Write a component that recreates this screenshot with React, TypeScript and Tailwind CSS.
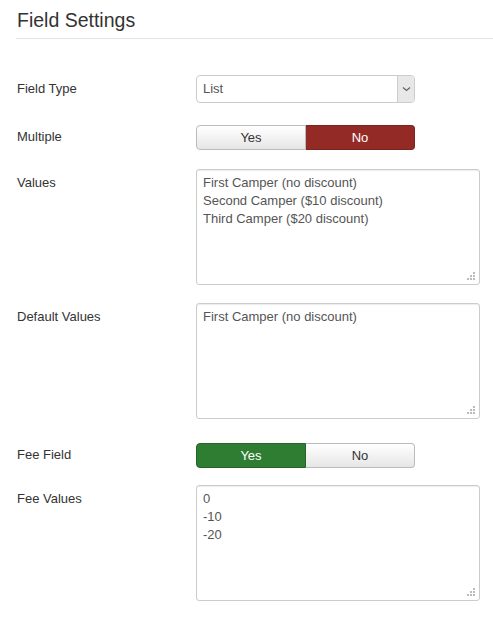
const FONT = { fontFamily: '"Liberation Sans", Arial, sans-serif' };

function Grip() {
  return (
    <svg
      className="absolute right-[3px] bottom-[3px]"
      width="9"
      height="9"
      viewBox="0 0 9 9"
    >
      <rect x="6" y="0" width="2" height="2" fill="#bbb" />
      <rect x="3" y="3" width="2" height="2" fill="#bbb" />
      <rect x="6" y="3" width="2" height="2" fill="#bbb" />
      <rect x="0" y="6" width="2" height="2" fill="#bbb" />
      <rect x="3" y="6" width="2" height="2" fill="#bbb" />
      <rect x="6" y="6" width="2" height="2" fill="#bbb" />
    </svg>
  );
}

function TextArea({ lines }: { lines: string[] }) {
  return (
    <div className="relative w-[284px] h-[116px] border border-[#ccc] rounded-[3px] bg-white shadow-[inset_0_1px_1px_rgba(0,0,0,0.075)] px-[6px] py-[4px] text-[13px] leading-[18px] text-[#555]">
      {lines.map((l) => (
        <div key={l}>{l}</div>
      ))}
      <Grip />
    </div>
  );
}

function Toggle({ value }: { value: "yes" | "no" }) {
  const off =
    "bg-gradient-to-b from-white to-[#e6e6e6] text-[#333] border-[#bbb]";
  return (
    <div className="flex w-[219px] h-[25px] text-[13px]">
      <div
        className={
          "flex-1 flex items-center justify-center border rounded-l-[4px] " +
          (value === "yes"
            ? "bg-[#2f7d32] border-[#25632a] text-white"
            : off)
        }
      >
        Yes
      </div>
      <div
        className={
          "flex-1 flex items-center justify-center border border-l-0 rounded-r-[4px] " +
          (value === "no"
            ? "bg-[#942a25] border-[#7a2420] text-white"
            : off)
        }
      >
        No
      </div>
    </div>
  );
}

function Row({
  label,
  labelPad = "pt-[5px]",
  className = "",
  children,
}: {
  label: string;
  labelPad?: string;
  className?: string;
  children: React.ReactNode;
}) {
  return (
    <div className={"flex items-start " + className}>
      <div
        className={
          "w-[180px] shrink-0 pl-px text-[13px] leading-[18px] text-[#333] " +
          labelPad
        }
      >
        {label}
      </div>
      {children}
    </div>
  );
}

export default function App() {
  return (
    <div className="w-[493px] h-[619px] bg-white overflow-hidden" style={FONT}>
      <div className="ml-4">
        {/* Header */}
        <h3 className="pl-px pt-[9px] pb-[7px] leading-[22px] text-[19.5px] text-[#333] border-b border-[#e5e5e5]">
          Field Settings
        </h3>

        <Row label="Field Type" className="mt-[36px]">
          <div className="relative w-[219px] h-[28px] border border-[#ccc] rounded-[4px] bg-white flex items-center">
            <span className="pl-[6px] text-[13px] text-[#555]">List</span>
            <div className="absolute right-0 top-0 bottom-0 w-[17px] bg-[#e8e8e8] border-l border-[#ccc] rounded-r-[3px] flex items-center justify-center">
              <svg width="9" height="6" viewBox="0 0 9 6">
                <path d="M1 1.5 L4.5 4.5 L8 1.5" fill="none" stroke="#666" strokeWidth="1.3" />
              </svg>
            </div>
          </div>
        </Row>

        <Row label="Multiple" labelPad="pt-[3px]" className="mt-[22px]">
          <Toggle value="no" />
        </Row>

        <Row label="Values" className="mt-[19px]">
          <TextArea
            lines={[
              "First Camper (no discount)",
              "Second Camper ($10 discount)",
              "Third Camper ($20 discount)",
            ]}
          />
        </Row>

        <Row label="Default Values" className="mt-[18px]">
          <TextArea lines={["First Camper (no discount)"]} />
        </Row>

        <Row label="Fee Field" labelPad="pt-[3px]" className="mt-[24px]">
          <Toggle value="yes" />
        </Row>

        <Row label="Fee Values" className="mt-[17px]">
          <TextArea lines={["0", "-10", "-20"]} />
        </Row>
      </div>
    </div>
  );
}
